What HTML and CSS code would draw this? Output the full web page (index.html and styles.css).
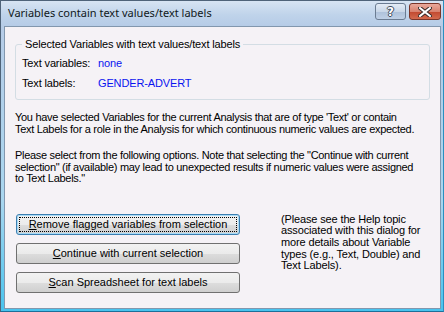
FILE: index.html
```html
<!DOCTYPE html>
<html lang="en">
  <head>
    <title>Variables contain text values/text labels</title>
    <link rel="stylesheet" href="styles.css">
  </head>
  <body>
    <div class="window">
      <div class="titlebar">
        <span class="title">Variables contain text values/text labels</span>
        <div class="caption-buttons">
          <button class="cap help">?</button>
          <button class="cap close">
            <svg width="14" height="10" viewBox="0 0 14 10">
              <path d="M2 1 L12 9 M12 1 L2 9" stroke="#3a2a28" stroke-width="4" stroke-linecap="square"/>
              <path d="M2 1 L12 9 M12 1 L2 9" stroke="#ffffff" stroke-width="2" stroke-linecap="square"/>
            </svg>
          </button>
        </div>
      </div>

      <div class="client">
        <fieldset class="group">
          <legend>Selected Variables with text values/text labels</legend>
          <div class="row">
            <span class="label">Text variables:</span>
            <span class="value">none</span>
          </div>
          <div class="row">
            <span class="label">Text labels:</span>
            <span class="value">GENDER-ADVERT</span>
          </div>
        </fieldset>

        <p class="note first">You have selected Variables for the current Analysis that are of type 'Text' or contain<br>Text Labels for a role in the Analysis for which continuous numeric values are expected.</p>
        <p class="note second">Please select from the following options. Note that selecting the "Continue with current<br>selection" (if available) may lead to unexpected results if numeric values were assigned<br>to Text Labels."</p>

        <div class="actions">
          <div class="buttons">
            <button class="btn focused"><span class="focus-ring"><u>R</u>emove flagged variables from selection</span></button>
            <button class="btn"><span><u>C</u>ontinue with current selection</span></button>
            <button class="btn"><span><u>S</u>can Spreadsheet for text labels</span></button>
          </div>
          <p class="help-text">(Please see the Help topic<br>associated with this dialog for<br>more details about Variable<br>types (e.g., Text, Double) and<br>Text Labels).</p>
        </div>
      </div>
    </div>
  </body>
</html>
```

FILE: styles.css
```css
html, body {
  margin: 0;
  padding: 0;
}
body {
  width: 444px;
  height: 312px;
  overflow: hidden;
}
.window {
  box-sizing: border-box;
  width: 444px;
  height: 312px;
  display: flex;
  flex-direction: column;
  border: 1px solid #4f6379;
  border-right-color: #2a8fc0;
  border-bottom-color: #1d6f99;
  background: linear-gradient(to bottom, #d7e4f3 0px, #bfd3ea 14px, #b6cce7 25px, #a9d6ef 200px, #48c3ee 100%);
  padding: 0 2px 2px 3px;
}
.titlebar {
  height: 25px;
  display: flex;
  align-items: center;
  justify-content: space-between;
}
.title {
  font-family: "Noto Sans", sans-serif;
  font-size: 11px;
  color: #101820;
  padding-left: 4px;
  margin-top: -3px;
}
.caption-buttons {
  display: flex;
  gap: 3px;
  margin-top: -4px;
}
.cap {
  box-sizing: border-box;
  width: 31px;
  height: 17px;
  padding: 0;
  border: 1px solid #6b7c92;
  border-radius: 3px;
  display: flex;
  align-items: center;
  justify-content: center;
}
.help {
  background: linear-gradient(to bottom, #e4ecf6 0%, #c9d7e8 50%, #aec1da 51%, #bfd0e6 100%);
  color: #ffffff;
  font-family: "DejaVu Sans", sans-serif;
  font-weight: bold;
  font-size: 12px;
  text-shadow: -1px 0 #3c4a5c, 1px 0 #3c4a5c, 0 -1px #3c4a5c, 0 1px #3c4a5c;
}
.close {
  width: 32px;
  border-color: #7a3529;
  background: linear-gradient(to bottom, #e9a99b 0%, #d8826f 50%, #c2482f 51%, #d36a4e 100%);
}
.client {
  flex: 1;
  background: #f5f2f6;
  border: 1px solid #8297ae;
  padding: 11px 10px 0 10px;
  font-family: "Liberation Sans", Arial, sans-serif;
  font-size: 11px;
  letter-spacing: -0.14px;
  color: #000000;
}
.group {
  margin: 0;
  padding: 0 6px 6px 6px;
  border: 1px solid #d3dde4;
  border-radius: 3px;
  height: 62px;
  box-sizing: border-box;
}
.group legend {
  padding: 0 3px;
  line-height: 13px;
}
.row {
  display: flex;
  line-height: 20px;
}
.row:first-of-type {
  margin-top: 2px;
}
.label {
  width: 76px;
}
.value {
  color: #0a14f0;
}
.note {
  margin: 0;
  line-height: 11.5px;
  letter-spacing: -0.3px;
  white-space: nowrap;
}
.note.first {
  margin-top: 12px;
}
.note.second {
  margin-top: 15px;
}
.actions {
  display: flex;
  margin-top: 29px;
}
.buttons {
  display: flex;
  flex-direction: column;
  gap: 8px;
  margin-left: 1px;
}
.btn {
  box-sizing: border-box;
  width: 224px;
  height: 21px;
  padding: 2px;
  border: 1px solid #707070;
  border-radius: 3px;
  background: linear-gradient(to bottom, #f2f2f2 0%, #ebebeb 50%, #dddddd 51%, #cfcfcf 100%);
  font-family: "Liberation Sans", Arial, sans-serif;
  font-size: 11px;
  color: #000000;
  display: flex;
}
.btn span {
  flex: 1;
  display: flex;
  align-items: center;
  justify-content: center;
  border: 1px solid transparent;
}
.btn.focused {
  border-color: #3c7fb1;
  box-shadow: inset 0 0 0 1px #a8dbf7;
}
.btn .focus-ring {
  border: 1px dotted #000000;
}
.help-text {
  margin: 0 0 0 41px;
  line-height: 11.7px;
  white-space: nowrap;
}
```
